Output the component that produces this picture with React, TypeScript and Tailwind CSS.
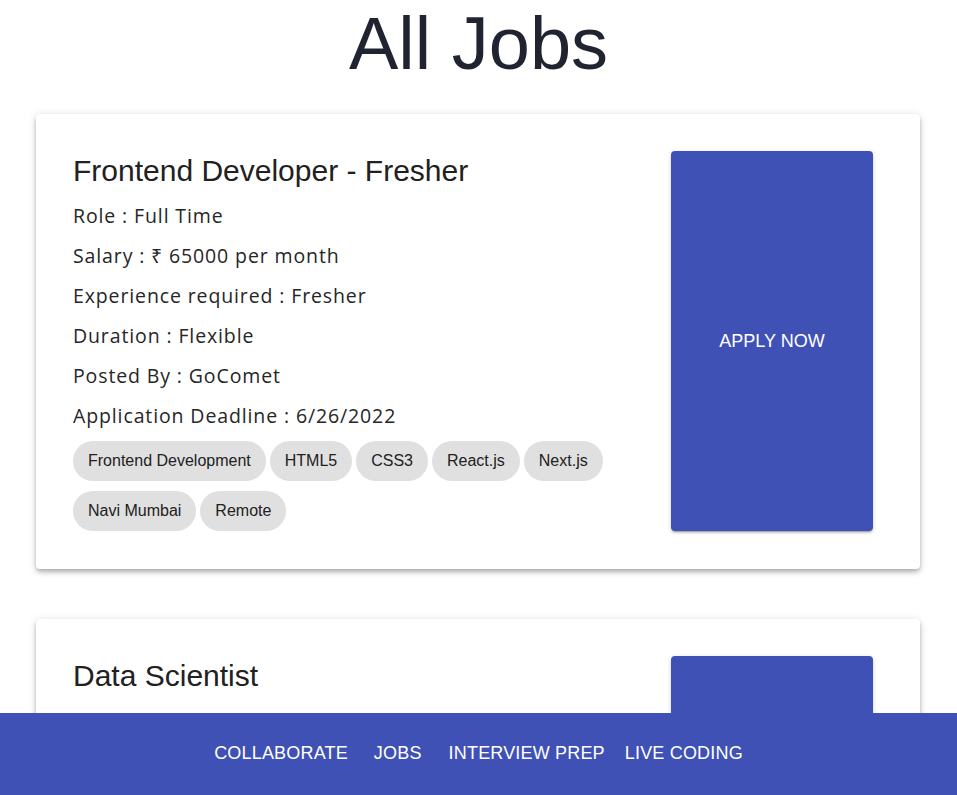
import React from "react";

type Job = {
  title: string;
  role: string;
  salary: string;
  experience: string;
  duration: string;
  postedBy: string;
  deadline: string;
  tags: string[];
};

const jobs: Job[] = [
  {
    title: "Frontend Developer - Fresher",
    role: "Full Time",
    salary: "₹ 65000 per month",
    experience: "Fresher",
    duration: "Flexible",
    postedBy: "GoComet",
    deadline: "6/26/2022",
    tags: ["Frontend Development", "HTML5", "CSS3", "React.js", "Next.js", "Navi Mumbai", "Remote"],
  },
  {
    title: "Data Scientist",
    role: "Full Time",
    salary: "₹ 80000 per month",
    experience: "1 year",
    duration: "Flexible",
    postedBy: "GoComet",
    deadline: "6/30/2022",
    tags: ["Python", "Machine Learning", "SQL", "Remote"],
  },
];

function JobCard({ job }: { job: Job }) {
  return (
    <div className="bg-white rounded-[4px] shadow-[0_2px_4px_-1px_rgba(0,0,0,0.2),0_4px_5px_0_rgba(0,0,0,0.14),0_1px_10px_0_rgba(0,0,0,0.12)] pl-[37px] pr-[47px] pt-[37px] pb-[38px] flex">
      <div className="flex-1 flex flex-col">
        <h2 className="font-['Liberation_Sans',Arial,sans-serif] text-[30px] leading-[40px] text-[#212121] mb-[5px]">
          {job.title}
        </h2>
        <div className="text-[19.5px] leading-[40px] text-[#262626] font-['Open_Sans',sans-serif] tracking-[0.045em]">
          <p>Role : {job.role}</p>
          <p>Salary : {job.salary}</p>
          <p>Experience required : {job.experience}</p>
          <p>Duration : {job.duration}</p>
          <p>Posted By : {job.postedBy}</p>
          <p>Application Deadline : {job.deadline}</p>
        </div>
        <div className="flex flex-wrap gap-x-[4px] gap-y-[10px] mt-[5px] max-w-[540px]">
          {job.tags.map((t) => (
            <span
              key={t}
              className="h-[40px] px-[15px] rounded-full bg-[#e0e0e0] text-[16px] text-[#212121] font-['Liberation_Sans',Arial,sans-serif] flex items-center"
            >
              {t}
            </span>
          ))}
        </div>
      </div>
      <button className="w-[202px] bg-[#3f51b5] rounded-[4px] text-white text-[18px] uppercase font-['Liberation_Sans',Arial,sans-serif] shadow-[0_3px_1px_-2px_rgba(0,0,0,0.2),0_2px_2px_0_rgba(0,0,0,0.14),0_1px_5px_0_rgba(0,0,0,0.12)] flex items-center justify-center">
        Apply Now
      </button>
    </div>
  );
}

export default function App() {
  return (
    <div className="min-h-screen bg-white pb-[120px] font-['Open_Sans',sans-serif]">
      <h1 className="font-['Liberation_Sans',Arial,sans-serif] text-[74px] leading-[74px] text-[#1f2430] text-center pt-[7px] mb-[33px]">
        All Jobs
      </h1>
      <div className="pl-[36px] pr-[37px] flex flex-col gap-[50px]">
        {jobs.map((j) => (
          <JobCard key={j.title} job={j} />
        ))}
      </div>
      <footer className="fixed bottom-0 left-0 right-0 h-[82px] bg-[#3f51b5] flex items-center justify-center text-white text-[18px] leading-[20px] pb-[2px] font-['Liberation_Sans',Arial,sans-serif] tracking-[0.01em]">
        <span>COLLABORATE</span>
        <span className="ml-[26px]">JOBS</span>
        <span className="ml-[27px]">INTERVIEW PREP</span>
        <span className="ml-[20px]">LIVE CODING</span>
      </footer>
    </div>
  );
}
